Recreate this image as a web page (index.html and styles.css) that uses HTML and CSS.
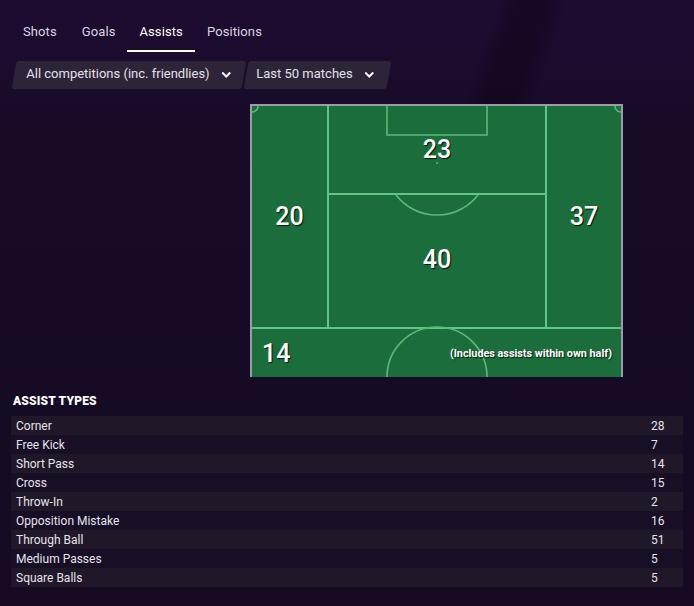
FILE: index.html
```html
<!DOCTYPE html>
<html lang="en">
<head>
<meta charset="utf-8">
<title>Assists</title>
<link rel="stylesheet" href="styles.css">
</head>
<body>
<div class="page">
  <nav class="tabs">
    <span class="tab">Shots</span>
    <span class="tab">Goals</span>
    <span class="tab active">Assists</span>
    <span class="tab">Positions</span>
  </nav>

  <div class="filters">
    <div class="filter filter-comp">
      <span class="filter-inner">All competitions (inc. friendlies)
        <svg class="chev" width="10" height="7" viewBox="0 0 10 7"><polyline points="1,1.5 5,5.5 9,1.5" fill="none" stroke="#ffffff" stroke-width="2"/></svg>
      </span>
    </div>
    <div class="filter filter-range">
      <span class="filter-inner">Last 50 matches
        <svg class="chev" width="10" height="7" viewBox="0 0 10 7"><polyline points="1,1.5 5,5.5 9,1.5" fill="none" stroke="#ffffff" stroke-width="2"/></svg>
      </span>
    </div>
  </div>

  <div class="pitch">
    <div class="zone zone-left"><span class="num">20</span></div>
    <div class="zone zone-top"><span class="num">23</span></div>
    <div class="zone zone-mid"><span class="num">40</span></div>
    <div class="zone zone-right"><span class="num">37</span></div>
    <div class="zone zone-bottom"><span class="num">14</span><span class="note">(Includes assists within own half)</span></div>
    <svg class="markings" width="369" height="271" viewBox="0 0 369 271">
      <g fill="none" stroke="#5cb97a" stroke-width="1.6">
        <path d="M135 0 V29 H235 V0"/>
        <path d="M144 89 A52 52 0 0 0 226 89"/>
        <path d="M135 271 A50 50 0 0 1 235 271"/>
        <path d="M0 6 A6 6 0 0 0 6 0"/>
        <path d="M363 0 A6 6 0 0 0 369 6"/>
      </g>
      <circle cx="185" cy="57" r="0.9" fill="#5cb97a"/>
    </svg>
  </div>

  <h3 class="section-title">ASSIST TYPES</h3>
  <div class="types">
    <div class="row"><span class="label">Corner</span><span class="val">28</span></div>
    <div class="row"><span class="label">Free Kick</span><span class="val">7</span></div>
    <div class="row"><span class="label">Short Pass</span><span class="val">14</span></div>
    <div class="row"><span class="label">Cross</span><span class="val">15</span></div>
    <div class="row"><span class="label">Throw-In</span><span class="val">2</span></div>
    <div class="row"><span class="label">Opposition Mistake</span><span class="val">16</span></div>
    <div class="row"><span class="label">Through Ball</span><span class="val">51</span></div>
    <div class="row"><span class="label">Medium Passes</span><span class="val">5</span></div>
    <div class="row"><span class="label">Square Balls</span><span class="val">5</span></div>
  </div>
</div>
</body>
</html>
```

FILE: styles.css
```css
* { box-sizing: border-box; }

html, body {
  margin: 0;
  height: 100%;
}

body {
  font-family: Roboto, "Liberation Sans", Arial, sans-serif;
  color: #e6e2ec;
  background:
    linear-gradient(109deg, rgba(0,0,0,0) 0, rgba(0,0,0,0) 68%, rgba(8,2,16,0.35) 71%, rgba(8,2,16,0.35) 75%, rgba(0,0,0,0) 78%) top left / 100% 110px no-repeat,
    linear-gradient(180deg, #1d0c30 0, #1b0b2d 70px, #170b26 130px, #150a22 100%);
  overflow: hidden;
}

.page {
  width: 694px;
  height: 606px;
}

/* Tabs */
.tabs {
  display: flex;
  margin: 14px 0 0 11px;
}

.tab {
  padding: 0 12px;
  height: 38px;
  line-height: 36px;
  font-size: 13px;
  letter-spacing: 0.1px;
  color: #d9d5e0;
  border-bottom: 2px solid transparent;
}

.tab:first-child { padding-right: 13px; }

.tab.active {
  color: #ffffff;
  border-bottom-color: #ffffff;
}

/* Filters */
.filters {
  display: flex;
  gap: 2px;
  margin: 9px 0 0 14px;
  height: 28px;
}

.filter {
  display: flex;
  align-items: center;
  height: 28px;
  padding-bottom: 3px;
  background: #2d2438;
  border-radius: 3px;
  transform: skewX(-10deg);
}

.filter-comp { padding-left: 12px; padding-right: 13px; }
.filter-range { padding-left: 10px; padding-right: 15px; }

.filter-inner {
  display: flex;
  align-items: center;
  gap: 12px;
  transform: skewX(10deg);
  font-size: 13px;
  color: #e4e0ea;
  white-space: nowrap;
}

.chev { display: block; margin-top: 2px; }

/* Pitch */
.pitch {
  position: relative;
  margin: 15px 0 0 250px;
  width: 373px;
  height: 273px;
  border: 2px solid #9e9ba8;
  border-bottom: 0;
  background: #66c387;
  display: grid;
  grid-template-columns: 75px 216px 74px;
  grid-template-rows: 87px 132px 48px;
  gap: 2px;
}

.zone {
  background: #1b6e3c;
  display: flex;
  align-items: center;
  justify-content: center;
}

.zone-left { grid-column: 1; grid-row: 1 / 3; }
.zone-top { grid-column: 2; grid-row: 1; }
.zone-mid { grid-column: 2; grid-row: 2; padding-bottom: 4px; }
.zone-right { grid-column: 3; grid-row: 1 / 3; }
.zone-bottom {
  grid-column: 1 / 4;
  grid-row: 3;
  justify-content: space-between;
  padding: 0 9px 0 10px;
}

.num {
  position: relative;
  z-index: 1;
  font-size: 25px;
  font-weight: 500;
  color: #ffffff;
  text-shadow: 1px 1px 1px rgba(0,0,0,0.85);
}

.note {
  position: relative;
  z-index: 1;
  font-size: 10.8px;
  font-weight: 700;
  color: #ffffff;
  text-shadow: 1px 1px 1px rgba(0,0,0,0.7);
}

.markings {
  position: absolute;
  left: 0;
  top: 0;
  pointer-events: none;
}

/* Assist types */
.section-title {
  margin: 16px 0 0 13px;
  font-size: 12px;
  line-height: 16px;
  font-weight: 900;
  letter-spacing: 0.2px;
  color: #ffffff;
}

.types {
  margin: 7px 11px 0 11px;
}

.row {
  display: grid;
  grid-template-columns: 1fr 32px;
  align-items: center;
  height: 19px;
  padding-top: 1px;
  font-size: 12px;
  color: #e6e2ec;
}

.row:nth-child(odd) { background: #201729; }
.row:nth-child(even) { background: #180e25; }

.label { padding-left: 5px; }
```
